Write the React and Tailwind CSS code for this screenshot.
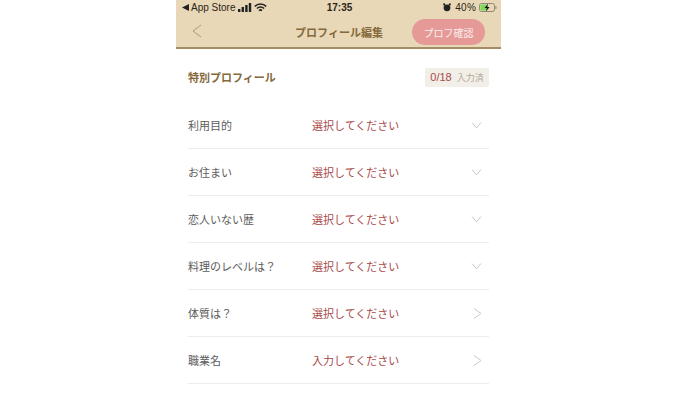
import React from "react";

const rows = [
  { label: "利用目的", value: "選択してください", arrow: "down" },
  { label: "お住まい", value: "選択してください", arrow: "down" },
  { label: "恋人いない歴", value: "選択してください", arrow: "down" },
  { label: "料理のレベルは？", value: "選択してください", arrow: "down" },
  { label: "体質は？", value: "選択してください", arrow: "right" },
  { label: "職業名", value: "入力してください", arrow: "right" },
];

const Arrow = ({ dir }) => (
  <svg width="12" height="12" viewBox="0 0 12 12" fill="none" stroke="#c9c9c9" strokeWidth="1">
    {dir === "down" ? <path d="M1 3.5l4.5 5.5 4.5-5.5" /> : <path d="M3 1.5l7 5-7 5" />}
  </svg>
);

const StatusBar = () => (
  <div className="h-[15px] flex items-center justify-between pl-[6px] pr-[4px] text-[10px] leading-none text-[#2b2416] font-['Liberation_Sans',sans-serif]">
    <div className="flex items-center w-[120px]">
      <svg width="7" height="7" viewBox="0 0 7 7" className="mr-[2px]"><path d="M0 3.5L7 0v7z" fill="#222" /></svg>
      <span>App Store</span>
      <svg width="14" height="9" viewBox="0 0 14 9" className="ml-[3px]" fill="#222">
        <rect x="0" y="6" width="2.4" height="3" />
        <rect x="3.6" y="4" width="2.4" height="5" />
        <rect x="7.2" y="2" width="2.4" height="7" />
        <rect x="10.8" y="0" width="2.4" height="9" />
      </svg>
      <svg width="13" height="10" viewBox="0 0 13 10" className="ml-[2px]" fill="none" stroke="#222" strokeWidth="1.5">
        <path d="M0.8 3.4a8 8 0 0 1 11.4 0" />
        <path d="M2.9 5.6a5 5 0 0 1 7.2 0" />
        <path d="M5 7.6a2.2 2.2 0 0 1 3 0" />
      </svg>
    </div>
    <span className="font-bold">17:35</span>
    <div className="flex items-center justify-end w-[120px]">
      <svg width="8" height="9" viewBox="0 0 8 9" className="mr-[4px]">
        <circle cx="4" cy="4.8" r="3.4" fill="#222" />
        <circle cx="1.2" cy="1.4" r="1.1" fill="#222" />
        <circle cx="6.8" cy="1.4" r="1.1" fill="#222" />
      </svg>
      <span className="tracking-[0.2px]">40%</span>
      <svg width="18" height="9" viewBox="0 0 18 9" className="ml-[3px]">
        <rect x="0.5" y="0.5" width="15" height="8" rx="2" fill="none" stroke="#8f8878" />
        <rect x="1.5" y="1.5" width="6.5" height="6" fill="#7ed957" />
        <path d="M9 0.8L5.6 5h2.2L7 8.4 10.6 4H8.4z" fill="#111" />
        <rect x="16.4" y="3" width="1" height="3" fill="#8f8878" />
      </svg>
    </div>
  </div>
);

export default function App() {
  return (
    <div className="w-[700px] h-[400px] overflow-hidden bg-white pl-[176px] font-['Noto_Sans_CJK_JP','Liberation_Sans',sans-serif]">
      <div className="w-[325px]">
        <div className="h-[49px] bg-[#e8d8b8] border-b-2 border-[#a38e68]">
          <StatusBar />
          <div className="relative h-[32px] flex items-center justify-center">
            <svg width="10" height="14" viewBox="0 0 10 14" fill="none" stroke="#a89a80" strokeWidth="1" className="absolute left-[16px] top-[9px]">
              <path d="M9 1L1 7l8 6" />
            </svg>
            <span className="text-[11px] font-bold text-[#85693b] mt-[2px] ml-[1px]">プロフィール編集</span>
            <div className="absolute right-[16px] top-[4px] w-[73px] h-[26px] rounded-full bg-[#e69a98] flex items-center justify-center text-[10px] text-[#fbeeee]">
              プロフ確認
            </div>
          </div>
        </div>
        <div className="px-[12px]">
          <div className="h-[53px] pt-[18px] flex items-start justify-between">
            <span className="text-[11px] leading-[20px] font-bold text-[#85693b]">特別プロフィール</span>
            <div className="h-[19px] w-[64px] mt-[1px] bg-[#f2eee8] rounded-[2px] flex items-center justify-center">
              <span className="text-[11px] text-[#a84a48] font-['Liberation_Sans',sans-serif]">0/18</span>
              <span className="text-[9px] text-[#b5ab9a] ml-[5px]">入力済</span>
            </div>
          </div>
          {rows.map((r) => (
            <div key={r.label} className="h-[47px] flex items-center border-b border-[#ececec] text-[11px]">
              <span className="w-[124px] text-[#5c5c5c]">{r.label}</span>
              <span className="flex-1 text-[#a84a48]">{r.value}</span>
              <div className="w-[12px] mr-[6px]">
                <Arrow dir={r.arrow} />
              </div>
            </div>
          ))}
        </div>
      </div>
    </div>
  );
}
